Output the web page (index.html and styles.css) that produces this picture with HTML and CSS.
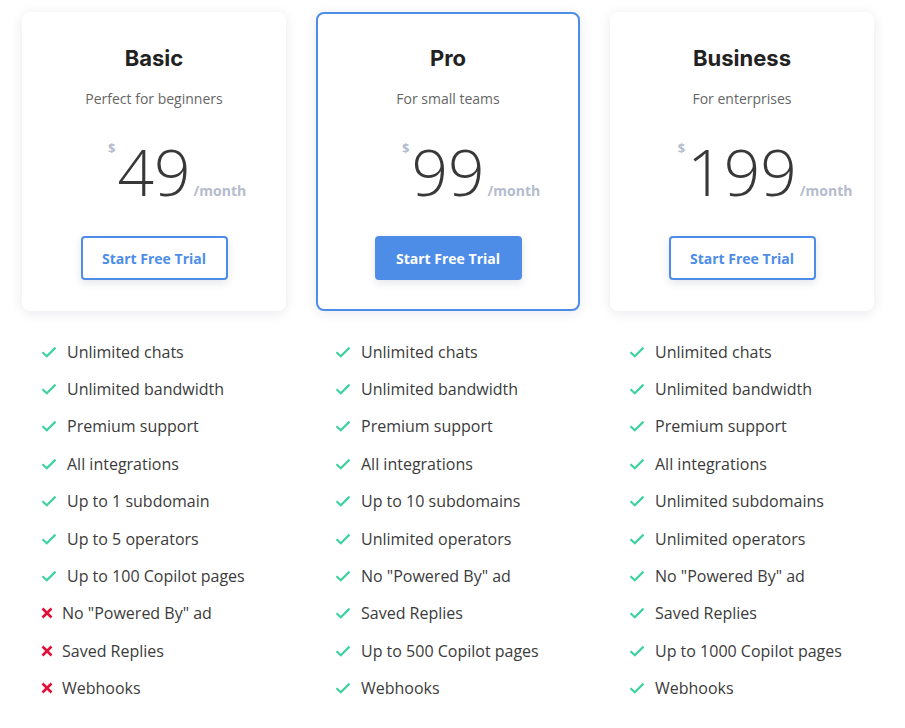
FILE: index.html
```html
<!DOCTYPE html>
<html>
<head>
<meta charset="utf-8">
<link rel="stylesheet" href="styles.css">
</head>
<body>
<div class="plans">
  <div class="plan">
    <div class="card">
      <h2 class="title">Basic</h2>
      <p class="sub">Perfect for beginners</p>
      <div class="price"><span class="amount"><span class="cur">$</span>49<span class="per">/month</span></span></div>
      <button class="btn">Start Free Trial</button>
    </div>
    <ul class="features">
      <li><svg class="ico ok" viewBox="0 0 16 12"><path d="M1.5 6.2 L5.8 10.2 L14.5 1.6"/></svg>Unlimited chats</li>
      <li><svg class="ico ok" viewBox="0 0 16 12"><path d="M1.5 6.2 L5.8 10.2 L14.5 1.6"/></svg>Unlimited bandwidth</li>
      <li><svg class="ico ok" viewBox="0 0 16 12"><path d="M1.5 6.2 L5.8 10.2 L14.5 1.6"/></svg>Premium support</li>
      <li><svg class="ico ok" viewBox="0 0 16 12"><path d="M1.5 6.2 L5.8 10.2 L14.5 1.6"/></svg>All integrations</li>
      <li><svg class="ico ok" viewBox="0 0 16 12"><path d="M1.5 6.2 L5.8 10.2 L14.5 1.6"/></svg>Up to 1 subdomain</li>
      <li><svg class="ico ok" viewBox="0 0 16 12"><path d="M1.5 6.2 L5.8 10.2 L14.5 1.6"/></svg>Up to 5 operators</li>
      <li><svg class="ico ok" viewBox="0 0 16 12"><path d="M1.5 6.2 L5.8 10.2 L14.5 1.6"/></svg>Up to 100 Copilot pages</li>
      <li><svg class="ico no" viewBox="0 0 12 12"><path d="M1.5 1.5 L10.5 10.5 M10.5 1.5 L1.5 10.5"/></svg>No "Powered By" ad</li>
      <li><svg class="ico no" viewBox="0 0 12 12"><path d="M1.5 1.5 L10.5 10.5 M10.5 1.5 L1.5 10.5"/></svg>Saved Replies</li>
      <li><svg class="ico no" viewBox="0 0 12 12"><path d="M1.5 1.5 L10.5 10.5 M10.5 1.5 L1.5 10.5"/></svg>Webhooks</li>
    </ul>
  </div>
  <div class="plan">
    <div class="card featured">
      <h2 class="title">Pro</h2>
      <p class="sub">For small teams</p>
      <div class="price"><span class="amount"><span class="cur">$</span>99<span class="per">/month</span></span></div>
      <button class="btn primary">Start Free Trial</button>
    </div>
    <ul class="features">
      <li><svg class="ico ok" viewBox="0 0 16 12"><path d="M1.5 6.2 L5.8 10.2 L14.5 1.6"/></svg>Unlimited chats</li>
      <li><svg class="ico ok" viewBox="0 0 16 12"><path d="M1.5 6.2 L5.8 10.2 L14.5 1.6"/></svg>Unlimited bandwidth</li>
      <li><svg class="ico ok" viewBox="0 0 16 12"><path d="M1.5 6.2 L5.8 10.2 L14.5 1.6"/></svg>Premium support</li>
      <li><svg class="ico ok" viewBox="0 0 16 12"><path d="M1.5 6.2 L5.8 10.2 L14.5 1.6"/></svg>All integrations</li>
      <li><svg class="ico ok" viewBox="0 0 16 12"><path d="M1.5 6.2 L5.8 10.2 L14.5 1.6"/></svg>Up to 10 subdomains</li>
      <li><svg class="ico ok" viewBox="0 0 16 12"><path d="M1.5 6.2 L5.8 10.2 L14.5 1.6"/></svg>Unlimited operators</li>
      <li><svg class="ico ok" viewBox="0 0 16 12"><path d="M1.5 6.2 L5.8 10.2 L14.5 1.6"/></svg>No "Powered By" ad</li>
      <li><svg class="ico ok" viewBox="0 0 16 12"><path d="M1.5 6.2 L5.8 10.2 L14.5 1.6"/></svg>Saved Replies</li>
      <li><svg class="ico ok" viewBox="0 0 16 12"><path d="M1.5 6.2 L5.8 10.2 L14.5 1.6"/></svg>Up to 500 Copilot pages</li>
      <li><svg class="ico ok" viewBox="0 0 16 12"><path d="M1.5 6.2 L5.8 10.2 L14.5 1.6"/></svg>Webhooks</li>
    </ul>
  </div>
  <div class="plan">
    <div class="card">
      <h2 class="title">Business</h2>
      <p class="sub">For enterprises</p>
      <div class="price"><span class="amount"><span class="cur">$</span>199<span class="per">/month</span></span></div>
      <button class="btn">Start Free Trial</button>
    </div>
    <ul class="features">
      <li><svg class="ico ok" viewBox="0 0 16 12"><path d="M1.5 6.2 L5.8 10.2 L14.5 1.6"/></svg>Unlimited chats</li>
      <li><svg class="ico ok" viewBox="0 0 16 12"><path d="M1.5 6.2 L5.8 10.2 L14.5 1.6"/></svg>Unlimited bandwidth</li>
      <li><svg class="ico ok" viewBox="0 0 16 12"><path d="M1.5 6.2 L5.8 10.2 L14.5 1.6"/></svg>Premium support</li>
      <li><svg class="ico ok" viewBox="0 0 16 12"><path d="M1.5 6.2 L5.8 10.2 L14.5 1.6"/></svg>All integrations</li>
      <li><svg class="ico ok" viewBox="0 0 16 12"><path d="M1.5 6.2 L5.8 10.2 L14.5 1.6"/></svg>Unlimited subdomains</li>
      <li><svg class="ico ok" viewBox="0 0 16 12"><path d="M1.5 6.2 L5.8 10.2 L14.5 1.6"/></svg>Unlimited operators</li>
      <li><svg class="ico ok" viewBox="0 0 16 12"><path d="M1.5 6.2 L5.8 10.2 L14.5 1.6"/></svg>No "Powered By" ad</li>
      <li><svg class="ico ok" viewBox="0 0 16 12"><path d="M1.5 6.2 L5.8 10.2 L14.5 1.6"/></svg>Saved Replies</li>
      <li><svg class="ico ok" viewBox="0 0 16 12"><path d="M1.5 6.2 L5.8 10.2 L14.5 1.6"/></svg>Up to 1000 Copilot pages</li>
      <li><svg class="ico ok" viewBox="0 0 16 12"><path d="M1.5 6.2 L5.8 10.2 L14.5 1.6"/></svg>Webhooks</li>
    </ul>
  </div>
</div>
</body>
</html>
```
FILE: styles.css
```css
* { box-sizing: border-box; }
html, body { margin: 0; background: #fff; }
body {
  font-family: "Open Sans", "Liberation Sans", sans-serif;
  padding: 12px 22px 0 22px;
}
.plans {
  display: grid;
  grid-template-columns: repeat(3, 264px);
  column-gap: 30px;
}
.card {
  height: 299px;
  background: #fff;
  border-radius: 8px;
  border: 2px solid transparent;
  box-shadow: 0 2px 12px rgba(30, 40, 80, 0.10);
  padding: 28px 0 0 0;
  display: flex;
  flex-direction: column;
  align-items: center;
}
.card.featured { border-color: #4d8de8; }
.title {
  margin: 0;
  font-family: Inter, "Noto Sans", sans-serif;
  font-weight: 700;
  font-size: 22px;
  line-height: 32px;
  color: #222;
}
.sub {
  margin: 15px 0 0 0;
  font-size: 14px;
  line-height: 20px;
  color: #666;
}
.price {
  margin-top: 31px;
  height: 64px;
  line-height: 64px;
  font-size: 64px;
  font-weight: 350;
  color: #383838;
}
.amount { position: relative; display: inline-block; }
.cur {
  position: absolute;
  right: 100%;
  margin-right: 2px;
  top: 0;
  font-size: 13px;
  line-height: 16px;
  font-weight: 700;
  color: #b4bccd;
}
.per {
  position: absolute;
  left: 100%;
  margin-left: 3px;
  bottom: 5px;
  font-size: 14px;
  line-height: 16px;
  font-weight: 700;
  color: #b4bccd;
  white-space: nowrap;
}
.btn {
  margin-top: 32px;
  width: 147px;
  height: 44px;
  border: 2px solid #4d8de8;
  border-radius: 4px;
  background: #fff;
  color: #4d8de8;
  font-family: "Open Sans", "Liberation Sans", sans-serif;
  font-weight: 700;
  font-size: 14px;
  box-shadow: 0 3px 8px rgba(30, 40, 80, 0.12);
  padding: 0;
}
.btn.primary { background: #4d8de8; color: #fff; }
.features {
  list-style: none;
  margin: 22px 0 0 0;
  padding: 0 0 0 19px;
}
.features li {
  display: flex;
  align-items: center;
  height: 37.4px;
  font-size: 16px;
  color: #3b3b3b;
}
.ico { flex: none; fill: none; stroke-linecap: butt; stroke-linejoin: miter; }
.ico.ok { width: 16px; height: 12px; margin-right: 10px; stroke: #3fd1a0; stroke-width: 2.2; }
.ico.no { width: 12px; height: 12px; margin-right: 9px; stroke: #e0103a; stroke-width: 2.6; }
```
